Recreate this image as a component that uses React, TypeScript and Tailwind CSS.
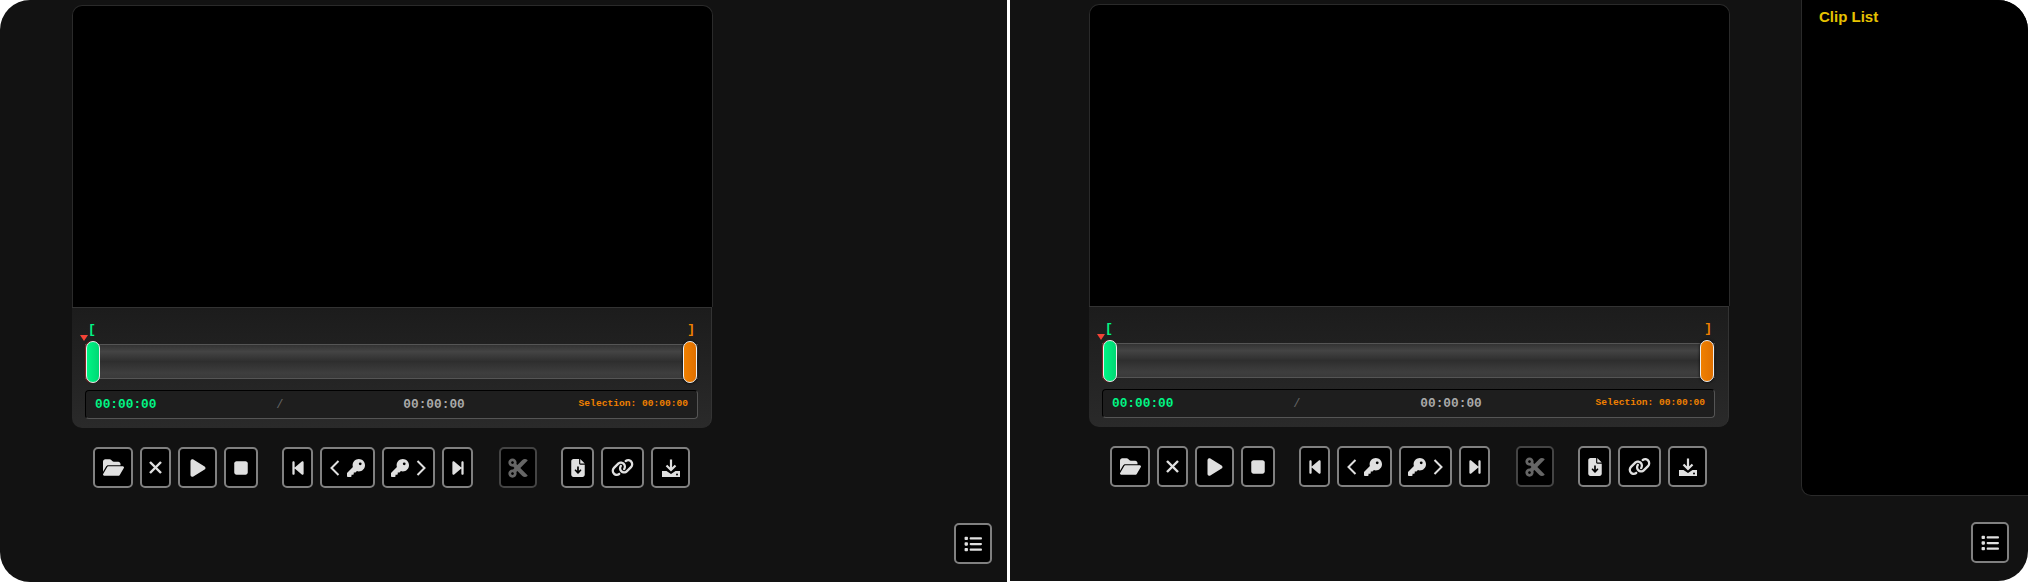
import {
  FaBackwardStep,
  FaFileArrowDown,
  FaFolderOpen,
  FaForwardStep,
  FaKey,
  FaLink,
  FaList,
  FaPlay,
  FaStop,
} from "react-icons/fa6";
import { FaCut } from "react-icons/fa";
import type { ReactNode } from "react";

function Btn({ className, children, off }: { className: string; children: ReactNode; off?: boolean }) {
  return (
    <button
      className={`flex h-[41px] items-center justify-center gap-[7px] rounded-[5px] border-2 bg-black ${
        off ? "border-[#444] text-[#666]" : "border-[#808080] text-[#e0e0e0]"
      } ${className}`}
    >
      {children}
    </button>
  );
}

// thin chevrons and the tray icon aren't close enough in the icon packs
function Chevron({ right }: { right?: boolean }) {
  return (
    <svg width="10" height="16" viewBox="0 0 10 16" fill="none" stroke="currentColor" strokeWidth="2">
      <polyline points={right ? "1.5,1 8.5,8 1.5,15" : "8.5,1 1.5,8 8.5,15"} />
    </svg>
  );
}

function CloseIcon() {
  return (
    <svg width="13" height="13" viewBox="0 0 13 13" stroke="currentColor" strokeWidth="2.4">
      <line x1="1" y1="1" x2="12" y2="12" />
      <line x1="12" y1="1" x2="1" y2="12" />
    </svg>
  );
}

function TrayIcon() {
  return (
    <svg width="18" height="18" viewBox="0 0 18 18">
      <path d="M9 0.5v10M4.5 6.5L9 11l4.5-4.5" fill="none" stroke="currentColor" strokeWidth="2.2" />
      <path d="M0 12h4.5L9 15l4.5-3H18v6H0z" fill="currentColor" />
      <circle cx="15" cy="15.5" r="1" fill="#000" />
    </svg>
  );
}

function Player() {
  return (
    <div className="w-[641px] shrink-0">
      <div className="h-[302px] rounded-t-[10px] border border-b-0 border-[#2a2a2a] bg-black" />
      <div className="w-[640px] rounded-b-[10px] border-t border-r border-[#333] bg-gradient-to-b from-[#1c1c1c] to-[#2a2a2a] px-[13px] pt-[13px] pb-[9px] font-['Liberation_Mono',monospace]">
        <div className="flex h-[18px] items-center justify-between px-[3px] text-[13px] font-bold">
          <span className="text-[#00f585]">[</span>
          <span className="text-[#f08000]">]</span>
        </div>
        <div className="relative my-[2px] h-[42px]">
          <div className="absolute inset-x-0 top-[3px] h-[35px] border-y border-[#555] bg-[linear-gradient(to_bottom,#333,#444_20%,#2e2e2e_50%,#3e3e3e_85%,#3a3a3a)]" />
          <div className="absolute top-[-6px] -left-[5px] h-0 w-0 border-x-4 border-t-[6px] border-x-transparent border-t-[#f44336]" />
          <div className="absolute top-0 left-[1px] h-[42px] w-[14px] rounded-[7px] border border-[#eee] bg-gradient-to-r from-[#00f585] to-[#00d874] shadow-[-1px_0_1px_#822]" />
          <div className="absolute top-0 right-[1px] h-[42px] w-[14px] rounded-[7px] border border-[#eee] bg-gradient-to-r from-[#f08000] to-[#e07000] shadow-[0_0_3px_#000]" />
        </div>
        <div className="mt-[7px] flex h-[29px] items-center justify-between rounded-[4px] border border-t-black border-l-black border-r-[#555] border-b-[#555] bg-[#1e1e1e] px-[9px]">
          <span className="text-[12.8px] font-bold text-[#00f585]">00:00:00</span>
          <span className="ml-[6px] text-[12px] text-[#666]">/</span>
          <span className="ml-[6px] text-[12.8px] font-bold text-[#aaa]">00:00:00</span>
          <span className="text-[9.6px] font-bold text-[#f08000]">Selection: 00:00:00</span>
        </div>
      </div>
      <div className="mt-[19px] flex pl-[21px]">
        <div className="flex gap-[7px]">
          <Btn className="w-[40px]"><FaFolderOpen size={21} /></Btn>
          <Btn className="w-[31px]"><CloseIcon /></Btn>
          <Btn className="w-[39px]"><FaPlay size={20} /></Btn>
          <Btn className="w-[34px]"><FaStop size={18} /></Btn>
        </div>
        <div className="ml-6 flex gap-[7px]">
          <Btn className="w-[31px]"><FaBackwardStep size={18} /></Btn>
          <Btn className="w-[55px]"><Chevron /><FaKey size={18} /></Btn>
          <Btn className="w-[53px]"><FaKey size={18} /><Chevron right /></Btn>
          <Btn className="w-[31px]"><FaForwardStep size={18} /></Btn>
        </div>
        <div className="ml-[26px]">
          <Btn off className="w-[38px]"><FaCut size={22} /></Btn>
        </div>
        <div className="ml-6 flex gap-[7px]">
          <Btn className="w-[33px]"><FaFileArrowDown size={18} /></Btn>
          <Btn className="w-[43px]"><FaLink size={23} /></Btn>
          <Btn className="w-[39px]"><TrayIcon /></Btn>
        </div>
      </div>
    </div>
  );
}

export default function App() {
  return (
    <div className="flex h-[582px] w-[2028px] overflow-hidden bg-white font-['Liberation_Sans',sans-serif]">
      <div className="relative w-[1007px] shrink-0 rounded-l-[30px] bg-[#121212] pt-[5px] pl-[72px]">
        <Player />
        <Btn className="absolute top-[523px] right-[15px] w-[38px]"><FaList size={18} /></Btn>
      </div>
      <div className="relative ml-[3px] flex h-[581px] flex-1 rounded-r-[30px] bg-[#121212] pt-1 pl-[79px]">
        <Player />
        <Btn className="absolute top-[522px] right-[19px] w-[38px]"><FaList size={18} /></Btn>
        <div className="-mt-1 ml-auto h-[496px] w-[227px] rounded-tr-[30px] rounded-bl-[10px] border-b border-l border-[#2a2a2a] bg-black pt-[6px] pl-[17px]">
          <h2 className="text-[15px] font-bold text-[#e6c200]">Clip List</h2>
        </div>
      </div>
    </div>
  );
}
